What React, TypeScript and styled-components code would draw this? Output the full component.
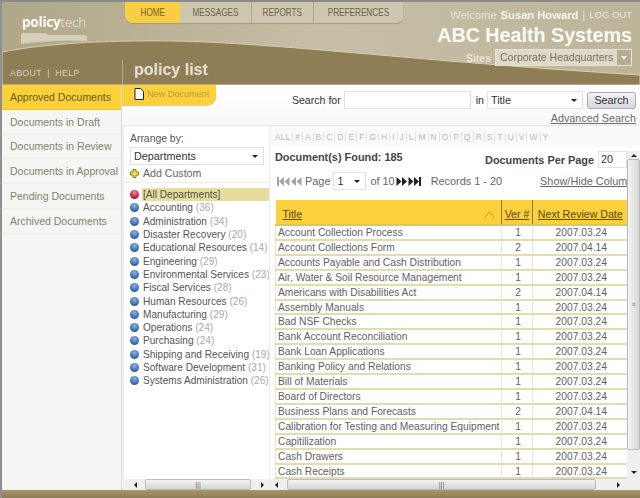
import React from "react";
import styled, { createGlobalStyle } from "styled-components";

const GlobalStyle = createGlobalStyle`
  html, body {
    margin: 0;
    padding: 0;
    background: #fff;
  }
  * {
    box-sizing: border-box;
  }
`;

const Page = styled.div`
  width: 640px;
  height: 498px;
  display: flex;
  flex-direction: column;
  overflow: hidden;
  border-top: 2px solid #8a8a8a;
  border-left: 2px solid #8f8f92;
  font-family: "Liberation Sans", Arial, sans-serif;
  font-size: 10.6px;
  color: #555;
  background: #fff;
`;

/* header */
const Header = styled.header`
  position: relative;
  flex: 0 0 83px;
  display: flex;
  background: #b3aa8d;
`;

const HeaderArt = styled.svg`
  position: absolute;
  inset: 0;
  width: 100%;
  height: 100%;
`;

const BrandColumn = styled.div`
  position: relative;
  flex: 0 0 120px;
  min-width: 0;
  display: flex;
  flex-direction: column;
  justify-content: space-between;
`;

const Logo = styled.div`
  padding: 11px 0 0 20px;
  font-size: 13.5px;
  line-height: 18px;
  color: #f1eee2;
  letter-spacing: -0.2px;
  font-family: "Open Sans", sans-serif;
  font-weight: 300;

  b {
    font-weight: 700;
    color: #fbfaf3;
  }
`;

const Folder = styled.svg`
  position: absolute;
  left: 17px;
  top: 30px;
  width: 70px;
  height: 12px;
`;

const AboutLinks = styled.div`
  height: 23px;
  padding: 6px 0 0 8px;
  font-size: 8.8px;
  letter-spacing: 0.3px;
  color: #d8d2bd;
`;

const CenterColumn = styled.div`
  position: relative;
  flex: 0 0 283px;
  min-width: 0;
  display: flex;
  flex-direction: column;
  justify-content: space-between;
`;

const Tabs = styled.nav`
  display: flex;
  height: 21px;
  width: 278px;
  margin-left: 3px;
  background: #cdc7b0;
  border-radius: 0 0 6px 8px;
  box-shadow: 0 1px 1px #a59b7b;
`;

const Tab = styled.div<{ $active?: boolean; $width: number }>`
  flex: 0 0 ${({ $width }) => $width}px;
  display: flex;
  align-items: center;
  justify-content: center;
  padding-bottom: 2px;
  font-size: 10.5px;
  color: #6d6446;
  border-right: 1px solid #b0a88d;
  ${({ $active }) =>
    $active &&
    `
    background: #f8cf43;
    border-right: none;
    border-radius: 0 0 0 8px;
    color: #77632a;
  `};
  &:last-child {
    border-right: none;
  }

  span {
    display: inline-block;
    transform: scaleX(0.78);
  }
`;

const PageTitle = styled.h1`
  margin: 0;
  height: 25px;
  padding: 0 0 0 11px;
  border-left: 1px solid #b5ab8c;
  font-size: 16px;
  line-height: 20px;
  font-weight: bold;
  color: #e6e2d2;
`;

const UserColumn = styled.div`
  position: relative;
  flex: 1;
  min-width: 0;
  display: flex;
  flex-direction: column;
  align-items: flex-end;
  padding: 6px 8px 0 0;
  white-space: nowrap;
`;

const Welcome = styled.div`
  display: flex;
  align-items: center;
  gap: 4px;
  font-size: 11.2px;
  line-height: 14px;
  color: #e6e2d2;

  b {
    color: #f6f4ea;
  }
  span {
    font-size: 9.5px;
    color: #ece8da;
  }
`;

const Company = styled.div`
  font-size: 19.7px;
  line-height: 24px;
  margin-top: 1px;
  font-weight: bold;
  color: #fbfaf4;
`;

const SitesRow = styled.div`
  display: flex;
  align-items: center;
  gap: 4px;
  margin-top: 2px;
  font-weight: bold;
  font-size: 10.5px;
  color: #e9e5d6;
`;

const SitesSelect = styled.div`
  display: flex;
  width: 137px;
  height: 17px;
  background: #dfdac8;
  border: 1px solid #e9e5d6;
  font-size: 10.5px;
  font-weight: normal;
  line-height: 15px;
  color: #77725f;
  padding-left: 4px;
  justify-content: space-between;
`;

const SitesArrow = styled.div`
  flex: 0 0 14px;
  display: flex;
  align-items: center;
  justify-content: center;
  background: #b5ad92;

  &::after {
    content: "";
    border: 3px solid transparent;
    border-top: 4px solid #efece0;
    border-bottom: none;
  }
`;

/* main area */
const Main = styled.div`
  flex: 1;
  min-height: 0;
  display: flex;
`;

const Sidebar = styled.aside`
  flex: 0 0 120px;
  min-width: 0;
  background: #f5f5f3;
  border-right: 1px solid #dededb;
`;

const SideItem = styled.div<{ $active?: boolean }>`
  height: 24.75px;
  padding-left: 8px;
  display: flex;
  align-items: center;
  font-size: 10.5px;
  white-space: nowrap;
  overflow: hidden;
  color: ${({ $active }) => ($active ? "#6a5a1e" : "#85816f")};
  background: ${({ $active }) => ($active ? "#fbd038" : "transparent")};
  border-bottom: 1px solid ${({ $active }) => ($active ? "#ecc436" : "#ecece9")};
`;

const Content = styled.div`
  flex: 1;
  min-width: 0;
  display: flex;
  flex-direction: column;
`;

const Toolbar = styled.div`
  flex: 0 0 40px;
  display: flex;
  justify-content: space-between;
  background: linear-gradient(#fff, #f8f8f8);
  border-bottom: 1px solid #e6e6e6;
`;

const NewDocument = styled.div`
  width: 94px;
  height: 20px;
  display: flex;
  align-items: center;
  gap: 3px;
  padding: 0 0 2px 12px;
  font-size: 9.1px;
  color: #b49a4c;
  background: #fbd038;
  border-radius: 0 0 9px 0;
  box-shadow: 0 1px 1px #d8c77c;
`;

const SearchForm = styled.div`
  display: flex;
  flex-direction: column;
  align-items: flex-end;
  padding: 6px 4px 0 0;
  color: #333;
`;

const SearchRow = styled.div`
  display: flex;
  align-items: center;
  gap: 3px;
  height: 18px;
`;

const SearchInput = styled.div`
  width: 127px;
  height: 18px;
  margin-right: 2px;
  background: #fff;
  border: 1px solid #e0e0e0;
`;

const SelectBox = styled.div<{ $width: number }>`
  flex: 0 0 auto;
  width: ${({ $width }) => $width}px;
  height: 18px;
  display: flex;
  align-items: center;
  justify-content: space-between;
  padding: 0 5px 0 3px;
  background: #fff;
  border: 1px solid #e2e2e2;
  color: #333;
  font-size: 10.8px;

  &::after {
    content: "";
    border: 3px solid transparent;
    border-top: 3px solid #222;
    border-bottom: none;
  }
`;

const SearchButton = styled.div`
  width: 49px;
  height: 17px;
  margin-left: 1px;
  display: flex;
  align-items: center;
  justify-content: center;
  font-size: 10.8px;
  color: #333;
  background: linear-gradient(#f4f4f6, #d6d6dc);
  border: 1px solid #a8a8b0;
  border-radius: 3px;
`;

const AdvancedLink = styled.a`
  margin-top: 3px;
  font-size: 10.8px;
  line-height: 13px;
  color: #6c6c6c;
  text-decoration: underline;
`;

const Panels = styled.div`
  flex: 1;
  min-height: 0;
  display: flex;
`;

/* departments pane */
const LeftPane = styled.section`
  flex: 0 0 148px;
  min-width: 0;
  display: flex;
  flex-direction: column;
  border-left: 2px solid #f0f0ee;
  border-right: 1px solid #ececec;
`;

const TreeArea = styled.div`
  flex: 1;
  min-height: 0;
  overflow: hidden;
  white-space: nowrap;
`;

const ArrangeBlock = styled.div`
  padding: 6px 4px 2px 6px;
  border-bottom: 1px solid #ececec;
  color: #555;
`;

const ArrangeLabel = styled.div`
  font-size: 10.4px;
  line-height: 14px;
  margin-bottom: 1px;
`;

const AddCustom = styled.div`
  display: flex;
  align-items: center;
  gap: 4px;
  margin-top: 1px;
  font-size: 10.6px;
  line-height: 14px;
  color: #666;
`;

const DeptList = styled.ul`
  list-style: none;
  margin: 5px 0 0;
  padding: 0;
`;

const DeptItem = styled.li<{ $selected?: boolean }>`
  height: 13.3px;
  display: flex;
  align-items: center;
  gap: 3px;
  padding-left: 6px;
  font-size: 10.1px;
  color: #555;

  span {
    flex: 1;
    padding-left: 1px;
    line-height: 13px;
    background: ${({ $selected }) => ($selected ? "#e5dd99" : "transparent")};
  }
  em {
    font-style: normal;
    color: #aaa;
  }
`;

const Bullet = styled.i<{ $red?: boolean }>`
  flex: 0 0 9px;
  height: 9px;
  border-radius: 50%;
  background: ${({ $red }) =>
    $red
      ? "radial-gradient(circle at 50% 30%, #f08a9c, #c31f3f 60%, #7a1028)"
      : "radial-gradient(circle at 50% 30%, #8fb4e4, #3a6fb5 60%, #1d3f72)"};
`;

/* documents pane */
const RightPane = styled.section`
  flex: 1;
  min-width: 0;
  display: flex;
  flex-direction: column;
`;

const LetterBar = styled.div`
  flex: 0 0 21px;
  display: flex;
  align-items: center;
  padding: 0 0 0 3px;
  font-size: 8.5px;
  color: #b9b9b9;
  background: #fafafa;
`;

const Letter = styled.span`
  padding: 0 2px;
  border-right: 1px solid #e2e2e2;
  &:last-child {
    border-right: none;
  }
`;

const DocsArea = styled.div`
  flex: 1;
  min-height: 0;
  display: flex;
`;

const DocsScroll = styled.div`
  flex: 1;
  min-width: 0;
  overflow: hidden;
  padding: 0 0 0 5px;
  white-space: nowrap;
`;

const FoundRow = styled.div`
  display: flex;
  justify-content: space-between;
  align-items: flex-start;
  height: 25px;
  padding-top: 4px;
  font-size: 10.9px;
  font-weight: bold;
  color: #444;
`;

const PerPage = styled.div`
  display: flex;
  align-items: center;
  gap: 4px;
`;

const PerPageInput = styled.div`
  width: 29px;
  height: 17px;
  padding-left: 2px;
  font-weight: normal;
  font-size: 10.8px;
  line-height: 15px;
  color: #333;
  background: #fff;
  border: 1px solid #e2e2e2;
`;

const PagerRow = styled.div`
  display: flex;
  align-items: center;
  height: 18px;
  padding-left: 2px;
  font-size: 10.9px;
  color: #666;
`;

const PagerIcon = styled.svg<{ $on?: boolean; $flip?: boolean }>`
  flex: 0 0 auto;
  width: 13px;
  height: 9px;
  fill: ${({ $on }) => ($on ? "#222" : "#a5a5a5")};
  transform: ${({ $flip }) => ($flip ? "scaleX(-1)" : "none")};
`;

const PagerText = styled.span<{ $left: number }>`
  margin-left: ${({ $left }) => $left}px;
`;

const PagerSelect = styled(SelectBox)`
  margin: 0 0 0 3px;
`;

const ShowHide = styled.a`
  margin-left: 38px;
  color: #666;
  text-decoration: underline;
`;

const DocTable = styled.table`
  width: 352px;
  margin-top: 10px;
  border-collapse: collapse;
  table-layout: fixed;
  font-size: 10.25px;
`;

const HeadCell = styled.th<{ $width: number; $center?: boolean }>`
  position: relative;
  width: ${({ $width }) => $width}px;
  height: 25px;
  padding: 3px ${({ $center }) => ($center ? "0" : "3px")} 0 ${({ $center }) => ($center ? "0" : "7px")};
  font-weight: normal;
  font-size: 10.6px;
  text-align: ${({ $center }) => ($center ? "center" : "left")};
  color: #5c4a10;
  text-decoration: underline;
  background: #fbd03c;
  border-left: 1px solid #8f7a2c;
  border-bottom: 2px solid #dcc46a;

  &:first-child {
    border-left: none;
  }
`;

const SortMark = styled.svg`
  position: absolute;
  right: 7px;
  top: 12px;
  width: 9px;
  height: 5px;
`;

const Row = styled.tr`
  height: 14.9px;
`;

const Cell = styled.td<{ $center?: boolean }>`
  padding: 2px 0 0 2px;
  line-height: 10.9px;
  color: #5f5f5f;
  text-align: ${({ $center }) => ($center ? "center" : "left")};
  border-bottom: 2px solid #e2dcae;
  border-left: 1px solid #ece8c6;
  overflow: hidden;
`;

/* scrollbars */
const VBar = styled.div`
  flex: 0 0 13px;
  display: flex;
  flex-direction: column;
  align-items: center;
  margin-top: 4px;
  background: #efefef;
`;

const VThumb = styled.div`
  flex: 1;
  width: 13px;
  margin: 0 0 16px;
  display: flex;
  align-items: center;
  justify-content: center;
  background: linear-gradient(90deg, #f4f4f4, #d8d8d8);
  border: 1px solid #b9b9b9;
  border-radius: 2px;
  color: #777;
  font-size: 7px;
`;

const ArrowCell = styled.div<{ $size?: number }>`
  flex: 0 0 ${({ $size }) => $size ?? 13}px;
  display: flex;
  align-items: center;
  justify-content: center;
`;

const Arrow = styled.i<{ $dir: "up" | "down" | "left" | "right" }>`
  width: 0;
  height: 0;
  border: 3px solid transparent;
  ${({ $dir }) => `border-${{ up: "bottom", down: "top", left: "right", right: "left" }[$dir]}-color: #222;`}
  ${({ $dir }) => `border-${$dir === "up" ? "top" : $dir === "down" ? "bottom" : $dir}-width: 0;`}
`;

const HBar = styled.div<{ $inset?: number }>`
  flex: 0 0 11px;
  display: flex;
  align-items: stretch;
  padding-left: ${({ $inset }) => $inset ?? 0}px;
  background: #efefef;
`;

const HThumb = styled.div`
  flex: 1;
  display: flex;
  align-items: center;
  justify-content: center;
  background: linear-gradient(#f4f4f4, #d4d4d4);
  border: 1px solid #bcbcbc;
  border-radius: 2px;
  font-size: 7px;
  color: #666;
`;

const HTrack = styled.div<{ $width: number }>`
  flex: 0 0 ${({ $width }) => $width}px;
`;

const FooterBand = styled.footer`
  flex: 0 0 8px;
  background: linear-gradient(#a8976c, #8d7c55);
`;

const tabs = [
  { label: "HOME", width: 55, active: true },
  { label: "MESSAGES", width: 72 },
  { label: "REPORTS", width: 62 },
  { label: "PREFERENCES", width: 89 },
];

const sideItems = [
  "Approved Documents",
  "Documents in Draft",
  "Documents in Review",
  "Documents in Approval",
  "Pending Documents",
  "Archived Documents",
];

const departments: [string, number][] = [
  ["Accounting", 36],
  ["Administration", 34],
  ["Disaster Recovery", 20],
  ["Educational Resources", 14],
  ["Engineering", 29],
  ["Environmental Services", 23],
  ["Fiscal Services", 28],
  ["Human Resources", 26],
  ["Manufacturing", 29],
  ["Operations", 24],
  ["Purchasing", 24],
  ["Shipping and Receiving", 19],
  ["Software Development", 31],
  ["Systems Administration", 26],
];

const letters = "ALL # A B C D E F G H I J L M N O P Q R S T U V W Y".split(" ");

const A = "2007.03.24";
const B = "2007.04.14";
const documents: [string, number, string][] = [
  ["Account Collection Process", 1, A],
  ["Account Collections Form", 2, B],
  ["Accounts Payable and Cash Distribution", 1, A],
  ["Air, Water & Soil Resource Management", 1, A],
  ["Americans with Disabilities Act", 2, B],
  ["Assembly Manuals", 1, A],
  ["Bad NSF Checks", 1, A],
  ["Bank Account Reconciliation", 1, A],
  ["Bank Loan Applications", 1, A],
  ["Banking Policy and Relations", 1, A],
  ["Bill of Materials", 1, A],
  ["Board of Directors", 1, A],
  ["Business Plans and Forecasts", 2, B],
  ["Calibration for Testing and Measuring Equipment", 1, A],
  ["Capitilization", 1, A],
  ["Cash Drawers", 1, A],
  ["Cash Receipts", 1, A],
];

const FirstIcon = ({ on, flip }: { on?: boolean; flip?: boolean }) => (
  <PagerIcon $on={on} $flip={flip} viewBox="0 0 13 9">
    <rect x="0" y="0" width="2" height="9" />
    <path d="M7 0v9L2 4.5zM12.5 0v9L7.5 4.5z" />
  </PagerIcon>
);

const PrevIcon = ({ on, flip }: { on?: boolean; flip?: boolean }) => (
  <PagerIcon $on={on} $flip={flip} viewBox="0 0 13 9">
    <path d="M6 0v9L1 4.5zM11.5 0v9L6.5 4.5z" />
  </PagerIcon>
);

export default function App() {
  return (
    <>
      <GlobalStyle />
      <Page>
        <Header>
          <HeaderArt viewBox="0 0 638 83" preserveAspectRatio="none">
            <defs>
              <linearGradient id="sky" x1="0" x2="1" y1="0" y2="0">
                <stop offset="0" stopColor="#b0a688" />
                <stop offset="0.5" stopColor="#c6bfa6" />
                <stop offset="1" stopColor="#bdb59a" />
              </linearGradient>
            </defs>
            <rect width="638" height="83" fill="url(#sky)" />
            <path
              d="M0 50C40 42 100 38 170 39C280 41 400 58 638 73V83H0Z"
              fill="#8f7d56"
              stroke="#d8d1b4"
              strokeWidth="1"
            />
          </HeaderArt>
          <BrandColumn>
            <Logo>
              <b>policy</b>tech
            </Logo>
            <Folder viewBox="0 0 70 12">
              <path d="M2 12V3q0-2 2-2h22q2 0 3 2h36q3 0 3 3v3q-30-2-66 3z" fill="#d6d0bb" />
            </Folder>
            <AboutLinks>ABOUT&nbsp; |&nbsp; HELP</AboutLinks>
          </BrandColumn>
          <CenterColumn>
            <Tabs>
              {tabs.map((t) => (
                <Tab key={t.label} $width={t.width} $active={t.active}>
                  <span>{t.label}</span>
                </Tab>
              ))}
            </Tabs>
            <PageTitle>policy list</PageTitle>
          </CenterColumn>
          <UserColumn>
            <Welcome>
              Welcome <b>Susan Howard</b> | <span>LOG OUT</span>
            </Welcome>
            <Company>ABC Health Systems</Company>
            <SitesRow>
              Sites
              <SitesSelect>
                Corporate Headquarters
                <SitesArrow />
              </SitesSelect>
            </SitesRow>
          </UserColumn>
        </Header>
        <Main>
          <Sidebar>
            {sideItems.map((s, i) => (
              <SideItem key={s} $active={i === 0}>
                {s}
              </SideItem>
            ))}
          </Sidebar>
          <Content>
            <Toolbar>
              <NewDocument>
                <svg width="10" height="12" viewBox="0 0 10 12">
                  <path d="M1 .5h5.5L9.5 3.5v8H1z" fill="#fff" stroke="#222" strokeWidth="1" />
                </svg>
                New Document
              </NewDocument>
              <SearchForm>
                <SearchRow>
                  Search for
                  <SearchInput />
                  in
                  <SelectBox $width={96}>Title</SelectBox>
                  <SearchButton>Search</SearchButton>
                </SearchRow>
                <AdvancedLink>Advanced Search</AdvancedLink>
              </SearchForm>
            </Toolbar>
            <Panels>
              <LeftPane>
                <TreeArea>
                  <ArrangeBlock>
                    <ArrangeLabel>Arrange by:</ArrangeLabel>
                    <SelectBox $width={134}>Departments</SelectBox>
                    <AddCustom>
                      <svg width="9" height="9" viewBox="0 0 9 9">
                        <path
                          d="M3 .5h3v2.5h2.5v3H6v2.5H3V6H.5V3H3z"
                          fill="#f4e04a"
                          stroke="#8a7a1e"
                          strokeWidth="1"
                        />
                      </svg>
                      Add Custom
                    </AddCustom>
                  </ArrangeBlock>
                  <DeptList>
                    <DeptItem $selected>
                      <Bullet $red />
                      <span>[All Departments]</span>
                    </DeptItem>
                    {departments.map(([name, count]) => (
                      <DeptItem key={name}>
                        <Bullet />
                        <span>
                          {name} <em>({count})</em>
                        </span>
                      </DeptItem>
                    ))}
                  </DeptList>
                </TreeArea>
                <HBar $inset={5}>
                  <ArrowCell>
                    <Arrow $dir="left" />
                  </ArrowCell>
                  <HTrack $width={3} />
                  <HThumb>|||</HThumb>
                  <HTrack $width={5} />
                  <ArrowCell>
                    <Arrow $dir="right" />
                  </ArrowCell>
                </HBar>
              </LeftPane>
              <RightPane>
                <LetterBar>
                  {letters.map((l) => (
                    <Letter key={l}>{l}</Letter>
                  ))}
                </LetterBar>
                <DocsArea>
                  <DocsScroll>
                    <FoundRow>
                      <span>Document(s) Found: 185</span>
                      <PerPage>
                        Documents Per Page
                        <PerPageInput>20</PerPageInput>
                      </PerPage>
                    </FoundRow>
                    <PagerRow>
                      <FirstIcon />
                      <PrevIcon />
                      <PagerText $left={2}>Page</PagerText>
                      <PagerSelect $width={33}>1</PagerSelect>
                      <PagerText $left={4}>of 10</PagerText>
                      <PrevIcon on flip />
                      <FirstIcon on flip />
                      <PagerText $left={10}>Records 1 - 20</PagerText>
                      <ShowHide>Show/Hide Columns</ShowHide>
                    </PagerRow>
                    <DocTable>
                      <thead>
                        <tr>
                          <HeadCell $width={226}>
                            Title
                            <SortMark viewBox="0 0 9 5">
                              <path d="M0 5L4.5 0L9 5" fill="none" stroke="#a8932f" />
                            </SortMark>
                          </HeadCell>
                          <HeadCell $width={31} $center>
                            Ver #
                          </HeadCell>
                          <HeadCell $width={95} $center>
                            Next Review Date
                          </HeadCell>
                        </tr>
                      </thead>
                      <tbody>
                        {documents.map(([title, ver, date]) => (
                          <Row key={title}>
                            <Cell>{title}</Cell>
                            <Cell $center>{ver}</Cell>
                            <Cell $center>{date}</Cell>
                          </Row>
                        ))}
                      </tbody>
                    </DocTable>
                  </DocsScroll>
                  <VBar>
                    <ArrowCell $size={8}>
                      <Arrow $dir="up" />
                    </ArrowCell>
                    <VThumb>≡</VThumb>
                    <ArrowCell>
                      <Arrow $dir="down" />
                    </ArrowCell>
                  </VBar>
                </DocsArea>
                <HBar>
                  <ArrowCell>
                    <Arrow $dir="left" />
                  </ArrowCell>
                  <HTrack $width={4} />
                  <HThumb>|||</HThumb>
                  <HTrack $width={16} />
                  <ArrowCell>
                    <Arrow $dir="right" />
                  </ArrowCell>
                  <HTrack $width={15} />
                </HBar>
              </RightPane>
            </Panels>
          </Content>
        </Main>
        <FooterBand />
      </Page>
    </>
  );
}
